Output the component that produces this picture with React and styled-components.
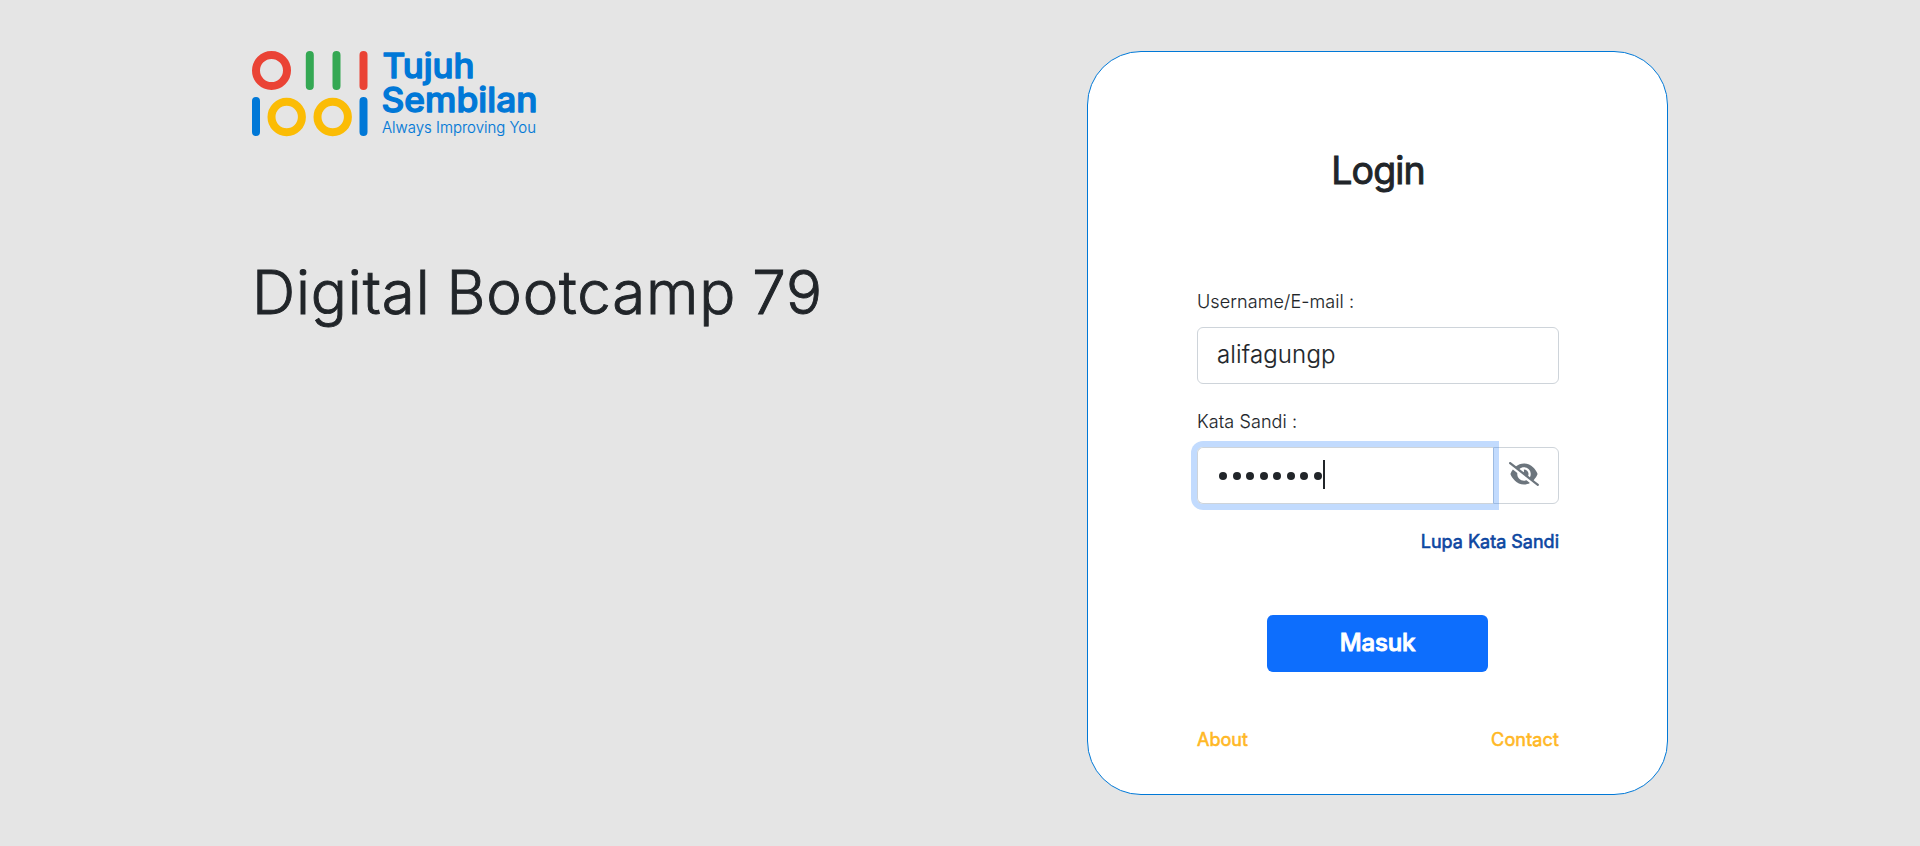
import React from "react";
import styled, { createGlobalStyle } from "styled-components";
import { FaEyeSlash } from "react-icons/fa6";

const GlobalStyle = createGlobalStyle`
  *, *::before, *::after { box-sizing: border-box; }
  body {
    margin: 0;
    background: #e5e5e5;
    color: #212529;
    font-family: Inter, "Liberation Sans", sans-serif;
    font-weight: 300;
  }
`;

const Page = styled.main`
  display: grid;
  grid-template-columns: 835px 581px;
  min-height: 846px;
  padding: 51px 252px;
`;

const Intro = styled.section`
  display: flex;
  flex-direction: column;
  align-items: flex-start;
`;

const LogoArt = styled.svg`
  display: block;
  width: 286px;
  height: 86px;
  overflow: visible;
`;

const Headline = styled.h1`
  margin: 119px 0 0;
  font-size: 60px;
  line-height: 72px;
  font-weight: 300;
  letter-spacing: 0.85px;
  word-spacing: -1.8px;
  -webkit-text-stroke: 0.9px currentColor;
  white-space: nowrap;
`;

const Card = styled.section`
  height: 744px;
  padding: 96px 108px 0 109px;
  border: 1px solid #0078d7;
  border-radius: 54px;
  background: #fff;
`;

const Title = styled.h2`
  margin: 0;
  font-size: 37.5px;
  line-height: 45px;
  font-weight: 400;
  letter-spacing: -0.9px;
  -webkit-text-stroke: 0.9px currentColor;
  text-align: center;
`;

const Form = styled.form`
  display: flex;
  flex-direction: column;
  padding-top: 95px;
`;

const Field = styled.div`
  display: flex;
  flex-direction: column;
  height: 120px;
`;

const Label = styled.label`
  height: 39px;
  font-size: 18px;
  line-height: 27px;
  letter-spacing: 0.1px;
  -webkit-text-stroke: 0.1px currentColor;
`;

const TextInput = styled.input`
  width: 100%;
  height: 57px;
  padding: 8px 19px 10px;
  border: 1px solid #ced4da;
  border-radius: 6px;
  outline: 0;
  background: #fff;
  color: #212529;
  font: inherit;
  font-size: 24px;
  letter-spacing: 0.15px;
  -webkit-text-stroke: 0.15px currentColor;
`;

const InputGroup = styled.div`
  display: flex;
  height: 57px;
`;

const SecretInput = styled.div`
  position: relative;
  z-index: 1;
  display: flex;
  align-items: center;
  flex: 1;
  padding: 0 21px;
  border: 1px solid #ced4da;
  border-right: 0;
  border-radius: 6px 0 0 6px;
  box-shadow: 0 0 0 6px rgba(13, 110, 253, 0.25);
`;

const Dots = styled.span`
  display: flex;
  gap: 5.5px;
`;

const Dot = styled.span`
  width: 8px;
  height: 8px;
  border-radius: 50%;
  background: #212529;
`;

const Caret = styled.span`
  width: 2px;
  height: 29px;
  margin: 0 0 3px 1px;
  background: #212529;
`;

const Reveal = styled.button`
  display: flex;
  align-items: center;
  justify-content: flex-start;
  width: 66px;
  padding: 0 0 4px 15px;
  border: 1px solid #ced4da;
  border-radius: 0 6px 6px 0;
  background: #fff;
  color: #6c757d;

  svg { width: 30px; height: 24px; }
`;

const TextLink = styled.a`
  color: ${(p) => p.$color};
  font-size: 18px;
  line-height: 27px;
  font-weight: 400;
  letter-spacing: ${(p) => p.$spacing || "0"};
  -webkit-text-stroke: 0.6px currentColor;
  text-decoration: none;
`;

const Forgot = styled.div`
  display: flex;
  justify-content: flex-end;
  height: 87px;
`;

const Submit = styled.button`
  align-self: center;
  width: 221px;
  height: 57px;
  margin-right: 1px;
  padding: 0 0 2px;
  border: 0;
  border-radius: 6px;
  background: #0d6efd;
  color: #fff;
  font: inherit;
  font-size: 24px;
  font-weight: 500;
  letter-spacing: -0.2px;
  -webkit-text-stroke: 0.9px currentColor;
`;

const Footer = styled.footer`
  display: flex;
  justify-content: space-between;
  margin-top: 54px;
`;

function Logo() {
  return (
    <LogoArt viewBox="252 51 286 86" role="img" aria-label="Tujuh Sembilan">
      <g fill="none" strokeWidth="8">
        <circle cx="271.5" cy="70.5" r="15.5" stroke="#ea4335" />
        <circle cx="286.7" cy="117" r="15.2" stroke="#fbbc05" />
        <circle cx="332.7" cy="117" r="15.2" stroke="#fbbc05" />
        <g strokeLinecap="round">
          <path d="M309.8 55v31M336.5 55v31" stroke="#34a853" />
          <path d="M363.5 55v31" stroke="#ea4335" />
          <path d="M256 101v31M363.5 101v31" stroke="#0078d7" />
        </g>
      </g>
      <g fill="#0078d7" fontFamily="Inter">
        <g fontSize="33.5" fontWeight="500" stroke="#0078d7" strokeWidth="1.3" strokeLinejoin="round">
          <text x="382.5" y="77.5" textLength="92" lengthAdjust="spacingAndGlyphs">Tujuh</text>
          <text x="381.5" y="111.8" textLength="156" lengthAdjust="spacingAndGlyphs">Sembilan</text>
        </g>
        <text x="382" y="132.5" fontSize="15.5" fontWeight="300" stroke="#0078d7" strokeWidth="0.15" textLength="154" lengthAdjust="spacingAndGlyphs">Always Improving You</text>
      </g>
    </LogoArt>
  );
}

export default function App() {
  return (
    <>
      <GlobalStyle />
      <Page>
        <Intro>
          <Logo />
          <Headline>Digital Bootcamp 79</Headline>
        </Intro>
        <Card>
          <Title>Login</Title>
          <Form onSubmit={(e) => e.preventDefault()}>
            <Field>
              <Label htmlFor="username">Username/E-mail :</Label>
              <TextInput id="username" defaultValue="alifagungp" spellCheck={false} />
            </Field>
            <Field>
              <Label>Kata Sandi :</Label>
              <InputGroup>
                <SecretInput>
                  <Dots>
                    {Array.from({ length: 8 }, (_, i) => <Dot key={i} />)}
                  </Dots>
                  <Caret />
                </SecretInput>
                <Reveal type="button" aria-label="Kata Sandi"><FaEyeSlash /></Reveal>
              </InputGroup>
            </Field>
            <Forgot>
              <TextLink href="#" $color="#0d47a1">Lupa Kata Sandi</TextLink>
            </Forgot>
            <Submit>Masuk</Submit>
          </Form>
          <Footer>
            <TextLink href="#" $color="#ffb825">About</TextLink>
            <TextLink href="#" $color="#ffb825" $spacing="0.15px">Contact</TextLink>
          </Footer>
        </Card>
      </Page>
    </>
  );
}
